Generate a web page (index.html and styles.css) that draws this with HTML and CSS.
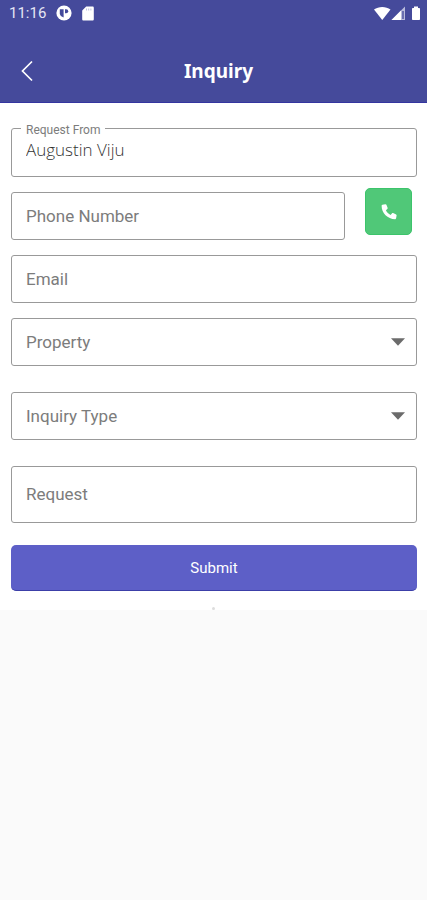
FILE: index.html
```html
<!DOCTYPE html>
<html lang="en">
<head>
<meta charset="utf-8">
<meta name="viewport" content="width=device-width, initial-scale=1">
<title>Inquiry</title>
<link rel="stylesheet" href="styles.css">
</head>
<body>
<header class="top">
  <div class="status">
    <span class="clock">11:16</span>
    <svg class="status-app" width="16" height="16" viewBox="0 0 16 16" aria-hidden="true">
      <circle cx="8" cy="8" r="7.600" fill="#fff"/>
      <path d="M3.800 4.200h3.800v8.400A4.700 4.700 0 0 1 3.800 9z" fill="#42489a"/>
      <path d="M9 4.200h1.200a2 2 0 0 1 0 4H9z" fill="#42489a"/>
    </svg>
    <svg class="status-card" width="12" height="15" viewBox="0 0 12 15" aria-hidden="true">
      <path d="M4.200 .5h6.300c.8 0 1.300.5 1.300 1.300v11.400c0 .8-.5 1.300-1.300 1.300h-9c-.8 0-1.300-.5-1.300-1.300V4.500z" fill="#fff"/>
      <path d="M4.500 2.500v2M6.700 2.500v2M8.900 2.500v2" stroke="#b9bbdc" stroke-width=".9"/>
    </svg>
    <svg class="status-signal" width="48" height="15" viewBox="0 0 48 15" aria-hidden="true">
      <path d="M0 3.500C4.500 0 12 0 16.500 3.500L8.250 14z" fill="#fff"/>
      <path d="M31 .5V14H17.500z" fill="#b9bbdc"/>
      <path d="M27 4.500V14h-9.500z" fill="#fff"/>
      <path d="M28 5v8h2V5z" fill="#6a6fb0"/>
      <path d="M40 .5h4v1.500h1.200c.5 0 .8.300.8.800v10.400c0 .5-.3.800-.8.800h-6.400c-.5 0-.8-.3-.8-.8V2.800c0-.5.3-.8.800-.8H40z" fill="#fff"/>
    </svg>
  </div>
  <div class="bar">
    <button class="back" type="button" aria-label="Back">
      <svg width="12" height="22" viewBox="0 0 12 22" aria-hidden="true"><path d="M11 1.500L1.500 11 11 20.500" fill="none" stroke="#fff" stroke-width="1.700"/></svg>
    </button>
    <h1>Inquiry</h1>
  </div>
</header>
<main>
  <form class="form">
    <div class="field name">
      <input id="from" type="text" value="Augustin Viju">
      <label for="from">Request From</label>
    </div>
    <div class="row">
      <div class="field">
        <input id="phone" type="tel">
        <label for="phone">Phone Number</label>
      </div>
      <button class="call" type="button" aria-label="Call">
        <svg width="16" height="16" viewBox="0 0 16 16" aria-hidden="true"><path d="M1.500 .7L4.300.3c.5-.1.900.1 1.100.5l1.200 3c.2.500 0 .9-.3 1.200L4.900 6.200c.9 1.900 2.700 3.700 4.700 4.700l1.300-1.500c.3-.4.8-.5 1.200-.3l3 1.300c.4.200.6.600.5 1l-.5 2.900c-.1.500-.5.900-1 .9C6.600 15.200.6 9.200.6 1.800c0-.6.400-1 .9-1.100z" fill="#fff"/></svg>
      </button>
    </div>
    <div class="field">
      <input id="email" type="email">
      <label for="email">Email</label>
    </div>
    <div class="field choice">
      <select id="property"><option value=""></option></select>
      <label for="property">Property</label>
      <svg class="arrow" width="14" height="8" viewBox="0 0 14 8" aria-hidden="true"><path d="M0 .3h14L7 7.700z" fill="#6b6b6b"/></svg>
    </div>
    <div class="field choice">
      <select id="type"><option value=""></option></select>
      <label for="type">Inquiry Type</label>
      <svg class="arrow" width="14" height="8" viewBox="0 0 14 8" aria-hidden="true"><path d="M0 .3h14L7 7.700z" fill="#6b6b6b"/></svg>
    </div>
    <div class="field request">
      <textarea id="request" rows="1"></textarea>
      <label for="request">Request</label>
    </div>
    <button class="submit" type="submit">Submit</button>
  </form>
  <div class="handle"></div>
</main>
</body>
</html>
```

FILE: styles.css
```css
* {
  box-sizing: border-box;
}

body {
  margin: 0;
  min-height: 100vh;
  background: #fafafa;
  font-family: Roboto, sans-serif;
}

button {
  margin: 0;
  padding: 0;
  border: 0;
  color: #fff;
  font-family: inherit;
}

svg {
  display: block;
}

.top {
  background: #454a9b;
  border-bottom: 1px solid #3435a0;
  color: #fff;
}

.status {
  display: flex;
  align-items: center;
  height: 28px;
  padding: 0 5px 2px 9px;
}

.clock {
  font-size: 15px;
  line-height: 20px;
  color: #e4e5f4;
}

.status-app {
  margin-left: 10px;
}

.status-card {
  margin-left: 10px;
}

.status-signal {
  margin-left: auto;
}

.bar {
  display: grid;
  grid-template-columns: 54px 1fr 44px;
  align-items: center;
  padding: 19px 0 7px;
}

.back {
  display: grid;
  place-items: center;
  height: 48px;
  background: none;
}

.bar h1 {
  margin: 0;
  font: 700 19px/28px "Noto Sans", sans-serif;
  text-align: center;
}

main {
  background: #fff;
}

.form {
  display: flex;
  flex-direction: column;
  padding: 25px 10px 16px 11px;
}

.field {
  position: relative;
  flex: 1;
  margin-bottom: 15px;
}

.field input,
.field select,
.field textarea {
  display: block;
  width: 100%;
  height: 48px;
  margin: 0;
  padding: 0 14px;
  border: 1px solid #999;
  border-radius: 3px;
  background: #fff;
  color: #333;
  font: 300 17px/22px "Open Sans", sans-serif;
  appearance: none;
  resize: none;
}

.field label {
  position: absolute;
  top: 14px;
  left: 15px;
  color: #7c7c7c;
  font-size: 17px;
  line-height: 20px;
  pointer-events: none;
}

.field.name input {
  height: 49px;
  padding-bottom: 6px;
}

.field.name label {
  top: -6px;
  left: 10px;
  padding: 0 5px;
  background: #fff;
  font-size: 12px;
  line-height: 16px;
}

.row {
  display: flex;
  align-items: flex-start;
  gap: 20px;
  padding-right: 5px;
}

.call {
  display: grid;
  place-items: center;
  width: 47px;
  height: 47px;
  margin-top: -4px;
  border: 1px solid #3cc46b;
  border-radius: 5px;
  background: #50c878;
}

.arrow {
  position: absolute;
  top: 20px;
  right: 12px;
  pointer-events: none;
}

.field.choice {
  margin-bottom: 26px;
}

.field.request {
  margin-bottom: 22px;
}

.field.request textarea {
  height: 57px;
}

.field.request label {
  top: 18px;
}

.submit {
  height: 46px;
  border-bottom: 1px solid #3c3fa8;
  border-radius: 5px;
  background: #5d5fc7;
  font-size: 15px;
}

.handle {
  width: 3px;
  height: 3px;
  margin: 0 auto;
  border-radius: 2px;
  background: #ddd;
}
```
